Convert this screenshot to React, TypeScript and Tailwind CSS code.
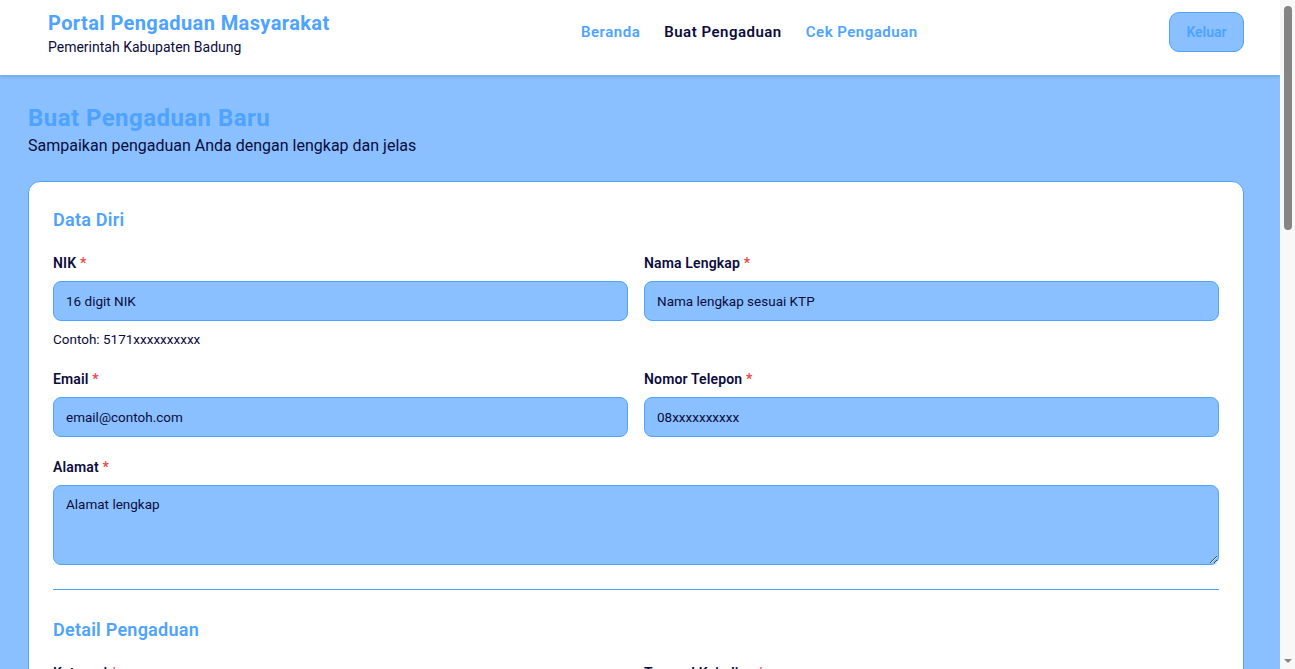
import React from "react";

const font = { fontFamily: 'Roboto, "Open Sans", sans-serif' };

function Label({ children }: { children: React.ReactNode }) {
  return (
    <label className="mb-2 block text-[14px] font-semibold leading-5 tracking-[0.15px] text-[#0c0c3c]">
      {children} <span className="text-[#ef4444]">*</span>
    </label>
  );
}

function Input({ placeholder }: { placeholder: string }) {
  return (
    <input
      readOnly
      placeholder={placeholder}
      className="block h-10 w-full rounded-lg border border-[#4da3ff] bg-[#8ac0ff] px-3 text-[13.5px] text-[#0c0c3c] placeholder:text-[#0c0c3c] outline-none"
    />
  );
}

function FakeScrollbar() {
  return (
    <div className="fixed right-0 top-0 flex h-screen w-[15px] flex-col items-center bg-[#f8f8f8]">
      <div className="mt-[6px] h-[224px] w-[8px] rounded-full bg-[#858585]" />
      <div className="flex-1" />
      <div className="mb-[6px] h-0 w-0 border-l-[4px] border-r-[4px] border-t-[4px] border-l-transparent border-r-transparent border-t-[#858585]" />
    </div>
  );
}

export default function App() {
  return (
    <div style={font} className="min-h-screen bg-[#8ac0ff] pr-[15px] text-[#0c0c3c]">
      <header className="flex h-[76px] items-start justify-between border-b border-[#79b3f5] bg-white pl-12 pr-9 pt-3 shadow-sm">
        <div className="-mt-[3px]">
          <div className="text-[20px] font-bold leading-7 tracking-[0.4px] text-[#4da3ff]">Portal Pengaduan Masyarakat</div>
          <div className="text-[14px] leading-5 text-[#0c0c3c]">Pemerintah Kabupaten Badung</div>
        </div>
        <nav className="flex h-10 items-center gap-6 text-[15px] font-semibold tracking-[0.5px]">
          <a className="text-[#4da3ff]">Beranda</a>
          <a className="text-[#0c0c3c]">Buat Pengaduan</a>
          <a className="text-[#4da3ff]">Cek Pengaduan</a>
        </nav>
        <button className="h-[40px] w-[75px] rounded-[10px] border border-[#4da3ff] bg-[#8ac0ff] text-[14px] font-semibold text-[#4da3ff]">
          Keluar
        </button>
      </header>

      <main className="pb-10 pl-7 pr-9 pt-[26px]">
        <h1 className="text-[24px] font-bold leading-8 tracking-[0.45px] text-[#4da3ff]">Buat Pengaduan Baru</h1>
        <p className="text-[16px] leading-6 text-[#0c0c3c]">Sampaikan pengaduan Anda dengan lengkap dan jelas</p>

        <div className="mt-[23px] rounded-xl border border-[#4da3ff] bg-white p-6">
          <h2 className="text-[18px] font-semibold leading-7 tracking-[0.25px] text-[#4da3ff]">Data Diri</h2>
          <div className="mt-[19px] grid grid-cols-2 gap-x-4 gap-y-5">
            <div>
              <Label>NIK</Label>
              <Input placeholder="16 digit NIK" />
              <p className="mt-[9px] text-[13.5px] leading-[19px]">Contoh: 5171xxxxxxxxxx</p>
            </div>
            <div>
              <Label>Nama Lengkap</Label>
              <Input placeholder="Nama lengkap sesuai KTP" />
            </div>
            <div>
              <Label>Email</Label>
              <Input placeholder="email@contoh.com" />
            </div>
            <div>
              <Label>Nomor Telepon</Label>
              <Input placeholder="08xxxxxxxxxx" />
            </div>
            <div className="col-span-2">
              <Label>Alamat</Label>
              <textarea
                readOnly
                placeholder="Alamat lengkap"
                className="block h-20 w-full rounded-lg border border-[#4da3ff] bg-[#8ac0ff] px-3 py-2 text-[13.5px] text-[#0c0c3c] placeholder:text-[#0c0c3c] outline-none"
              />
            </div>
          </div>

          <hr className="mb-[26px] mt-6 border-[#4da3ff]" />

          <h2 className="text-[18px] font-semibold leading-7 tracking-[0.25px] text-[#4da3ff]">Detail Pengaduan</h2>
          <div className="mt-[19px] grid grid-cols-2 gap-x-4 gap-y-5">
            <div>
              <Label>Kategori</Label>
              <select className="block h-10 w-full rounded-lg border border-[#4da3ff] bg-[#8ac0ff] px-3 text-[13.5px] text-[#0c0c3c] outline-none">
                <option>Pilih Kategori</option>
              </select>
            </div>
            <div>
              <Label>Tanggal Kejadian</Label>
              <Input placeholder="hh/bb/tttt" />
            </div>
            <div className="col-span-2">
              <Label>Judul Pengaduan</Label>
              <Input placeholder="Judul singkat pengaduan" />
            </div>
            <div className="col-span-2">
              <Label>Lokasi Kejadian</Label>
              <Input placeholder="Lokasi kejadian" />
            </div>
            <div className="col-span-2">
              <Label>Deskripsi Pengaduan</Label>
              <textarea
                readOnly
                placeholder="Jelaskan pengaduan Anda secara detail"
                className="block h-40 w-full rounded-lg border border-[#4da3ff] bg-[#8ac0ff] px-3 py-2 text-[13.5px] text-[#0c0c3c] placeholder:text-[#0c0c3c] outline-none"
              />
            </div>
          </div>

          <hr className="mb-[26px] mt-6 border-[#4da3ff]" />

          <h2 className="text-[18px] font-semibold leading-7 tracking-[0.25px] text-[#4da3ff]">Lampiran</h2>
          <div className="mt-[19px]">
            <label className="mb-2 block text-[14px] font-semibold leading-5 text-[#0c0c3c]">Foto / Dokumen Pendukung</label>
            <div className="flex h-32 items-center justify-center rounded-lg border border-dashed border-[#4da3ff] bg-[#8ac0ff] text-[14px]">
              Klik untuk mengunggah file (JPG, PNG, PDF, maks. 5MB)
            </div>
          </div>

          <label className="mt-6 flex items-start gap-2 text-[14px]">
            <input type="checkbox" className="mt-1" readOnly />
            <span>Saya menyatakan bahwa data yang saya berikan adalah benar dan dapat dipertanggungjawabkan.</span>
          </label>

          <div className="mt-6 flex justify-end gap-3">
            <button className="h-10 rounded-lg border border-[#4da3ff] bg-white px-5 text-[14px] font-semibold text-[#4da3ff]">Batal</button>
            <button className="h-10 rounded-lg border border-[#4da3ff] bg-[#4da3ff] px-5 text-[14px] font-semibold text-white">Kirim Pengaduan</button>
          </div>
        </div>

        <div className="mt-6 rounded-xl border border-[#4da3ff] bg-white p-6 text-[14px]">
          <h2 className="text-[18px] font-semibold leading-7 text-[#4da3ff]">Informasi</h2>
          <ul className="mt-3 list-disc space-y-1 pl-5">
            <li>Pengaduan akan diproses dalam 1x24 jam kerja.</li>
            <li>Simpan nomor tiket untuk mengecek status pengaduan.</li>
            <li>Pengaduan palsu dapat dikenakan sanksi sesuai peraturan yang berlaku.</li>
          </ul>
        </div>
      </main>
      <FakeScrollbar />
    </div>
  );
}
